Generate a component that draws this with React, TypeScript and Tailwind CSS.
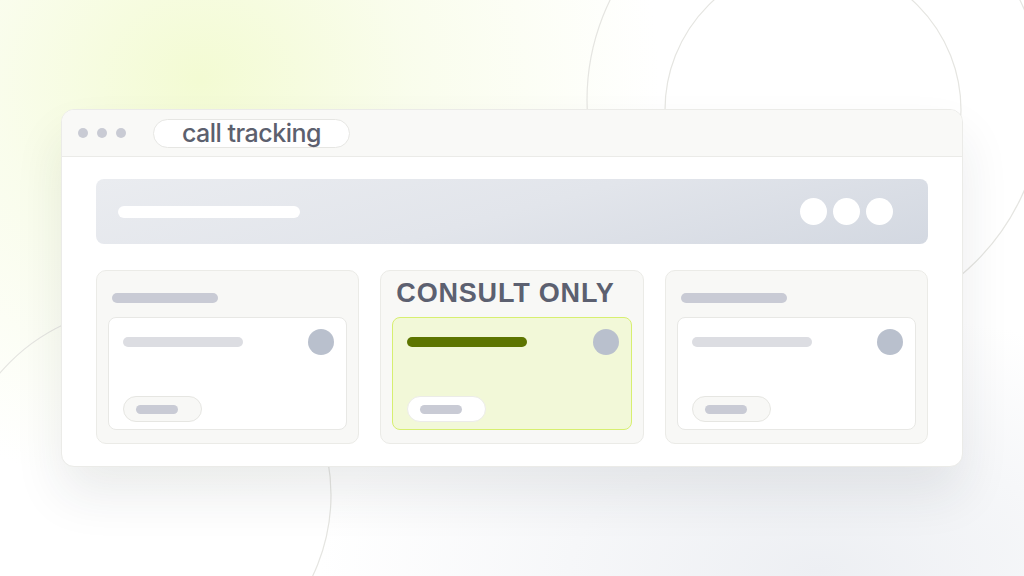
import React from "react";

function Column({ highlight }: { highlight?: boolean }) {
  return (
    <div className="flex h-[174px] flex-col rounded-[10px] border border-[#ebebe7] bg-[#f8f8f6] px-[11px] pb-[13px]">
      {highlight ? (
        <div className="h-[46px] pl-[4px] pt-[9px]">
          <div
            className="text-[27px] font-bold leading-none tracking-[0.03em] text-[#5c6070]"
            style={{ fontFamily: '"Liberation Sans", Arial, sans-serif' }}
          >
            CONSULT ONLY
          </div>
        </div>
      ) : (
        <div className="h-[46px] pl-[4px] pt-[22px]">
          <div className="h-[10px] w-[106px] rounded-full bg-[#c9cbd5]" />
        </div>
      )}
      <div
        className={
          "flex flex-1 flex-col justify-between rounded-[8px] border-[1.5px] pb-[7px] pl-[14px] pr-[12px] pt-[11px] " +
          (highlight ? "border-[#d7ef70] bg-[#f2f8d8]" : "border-[#e8e8e5] bg-white")
        }
      >
        <div className="flex items-center justify-between">
          <div className={"h-[10px] w-[120px] rounded-full " + (highlight ? "bg-[#5d7500]" : "bg-[#dcdde2]")} />
          <div className="h-[26px] w-[26px] rounded-full bg-[#b9c0cd]" />
        </div>
        <div
          className={
            "flex h-[26px] w-[79px] items-center rounded-full border pl-[12px] " +
            (highlight ? "border-[#ecece8] bg-white" : "border-[#e6e6e2] bg-[#f8f8f6]")
          }
        >
          <div className="h-[9px] w-[42px] rounded-full bg-[#c9cbd5]" />
        </div>
      </div>
    </div>
  );
}

export default function App() {
  return (
    <div
      className="relative flex h-[576px] w-[1024px] items-center justify-center overflow-hidden bg-white bg-[radial-gradient(ellipse_460px_420px_at_200px_80px,#f3fbd3_0%,rgba(247,252,228,0.7)_45%,rgba(255,255,255,0)_100%),radial-gradient(ellipse_500px_260px_at_820px_570px,#edeff3_0%,rgba(255,255,255,0)_100%)]"
      style={{ fontFamily: "Inter, 'Noto Sans', sans-serif" }}
    >
      <svg className="absolute inset-0" width="1024" height="576" viewBox="0 0 1024 576" fill="none">
        <circle cx="815" cy="100" r="228" stroke="#e5e5e1" strokeWidth="1.2" />
        <circle cx="813" cy="110" r="148" stroke="#e5e5e1" strokeWidth="1.2" />
        <circle cx="143" cy="495" r="188" stroke="#e5e5e1" strokeWidth="1.2" />
      </svg>

      <div className="relative z-10 flex h-[358px] w-[902px] flex-col overflow-hidden rounded-[13px] border border-[#ebebe8] bg-white shadow-[0_28px_50px_rgba(30,40,60,0.09)]">
        <div className="flex h-[47px] shrink-0 items-center border-b border-[#ebebe8] bg-[#f9f9f7] pl-[16px]">
          <div className="flex gap-[9px]">
            <div className="h-[10px] w-[10px] rounded-full bg-[#c9cbd4]" />
            <div className="h-[10px] w-[10px] rounded-full bg-[#c9cbd4]" />
            <div className="h-[10px] w-[10px] rounded-full bg-[#c9cbd4]" />
          </div>
          <div className="ml-[27px] flex h-[29px] w-[197px] items-center justify-center rounded-full border border-[#e6e6e3] bg-white">
            <span className="text-[25px] font-medium leading-none tracking-[-0.02em] text-[#5c606e]">call tracking</span>
          </div>
        </div>

        <div className="flex flex-1 flex-col px-[34px] pt-[22px]">
          <div className="flex h-[65px] items-center justify-between rounded-[8px] bg-[linear-gradient(165deg,#eaecf0_0%,#e2e5eb_50%,#d3d8e1_100%)] pl-[22px] pr-[35px]">
            <div className="h-[12px] w-[182px] rounded-full bg-white" />
            <div className="flex gap-[6px]">
              <div className="h-[27px] w-[27px] rounded-full bg-white" />
              <div className="h-[27px] w-[27px] rounded-full bg-white" />
              <div className="h-[27px] w-[27px] rounded-full bg-white" />
            </div>
          </div>

          <div className="mt-[26px] grid grid-cols-3 gap-[21px]">
            <Column />
            <Column highlight />
            <Column />
          </div>
        </div>
      </div>
    </div>
  );
}
